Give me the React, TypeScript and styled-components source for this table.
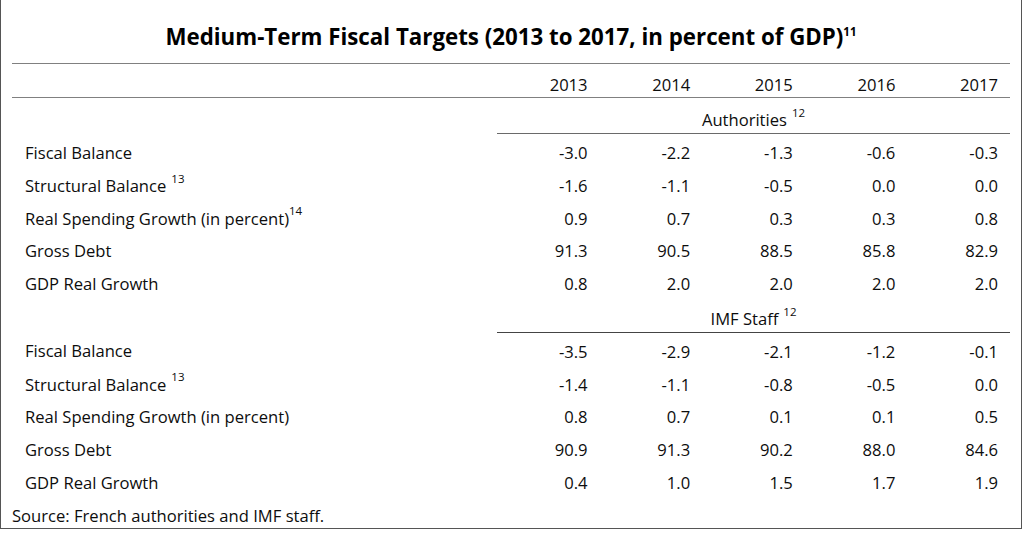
import React from 'react';
import styled, { createGlobalStyle } from 'styled-components';

interface Row {
  label: string;
  note?: string;
  tight?: boolean;
  values: string[];
}

interface Group {
  name: string;
  note: string;
  rows: Row[];
}

const years = ['2013', '2014', '2015', '2016', '2017'];

const groups: Group[] = [
  {
    name: 'Authorities',
    note: '12',
    rows: [
      { label: 'Fiscal Balance', values: ['-3.0', '-2.2', '-1.3', '-0.6', '-0.3'] },
      { label: 'Structural Balance', note: '13', values: ['-1.6', '-1.1', '-0.5', '0.0', '0.0'] },
      {
        label: 'Real Spending Growth (in percent)',
        note: '14',
        tight: true,
        values: ['0.9', '0.7', '0.3', '0.3', '0.8'],
      },
      { label: 'Gross Debt', values: ['91.3', '90.5', '88.5', '85.8', '82.9'] },
      { label: 'GDP Real Growth', values: ['0.8', '2.0', '2.0', '2.0', '2.0'] },
    ],
  },
  {
    name: 'IMF Staff',
    note: '12',
    rows: [
      { label: 'Fiscal Balance', values: ['-3.5', '-2.9', '-2.1', '-1.2', '-0.1'] },
      { label: 'Structural Balance', note: '13', values: ['-1.4', '-1.1', '-0.8', '-0.5', '0.0'] },
      { label: 'Real Spending Growth (in percent)', values: ['0.8', '0.7', '0.1', '0.1', '0.5'] },
      { label: 'Gross Debt', values: ['90.9', '91.3', '90.2', '88.0', '84.6'] },
      { label: 'GDP Real Growth', values: ['0.4', '1.0', '1.5', '1.7', '1.9'] },
    ],
  },
];

const GlobalStyle = createGlobalStyle`
  html, body {
    margin: 0;
    padding: 0;
    background: #ffffff;
  }
  body {
    font-family: "Open Sans", "Noto Sans", "Liberation Sans", sans-serif;
    color: #0d0d0d;
  }
`;

const Frame = styled.div`
  width: 1022px;
  height: 529px;
  border: 1px solid #555;
  border-top: none;
  padding: 0 11px 0 11px;
  box-sizing: border-box;
  overflow: hidden;
`;

const Title = styled.div`
  height: 64px;
  padding-top: 23px;
  box-sizing: border-box;
  text-align: center;
  font-size: 22.3px;
  font-weight: 700;
  line-height: 28px;
  color: #000;
  border-bottom: 1px solid #808080;
`;

const Sup = styled.sup<{ $spaced?: boolean; $bold?: boolean }>`
  font-size: 11.5px;
  line-height: 0;
  vertical-align: 0;
  position: relative;
  top: -0.8em;
  margin-left: ${(p) => (p.$spaced ? '5px' : '0')};
  font-weight: ${(p) => (p.$bold ? 700 : 400)};
`;

const Table = styled.table`
  width: 100%;
  border-collapse: collapse;
  table-layout: fixed;
  font-size: 16.6px;
`;

const LabelCol = styled.col`
  width: 485px;
`;

const ValueCol = styled.col`
  width: 102.6px;
`;

const YearCell = styled.th`
  height: 33px;
  padding: 0 12px 0 0;
  text-align: right;
  font-weight: 400;
  vertical-align: bottom;
  line-height: 24px;
  border-bottom: 1px solid #808080;
`;

const BlankHead = styled.th`
  border-bottom: 1px solid #808080;
`;

const GroupCell = styled.td<{ $tall?: boolean }>`
  height: ${(p) => (p.$tall ? '33px' : '29px')};
  padding: 0 0 2px 0;
  text-align: center;
  vertical-align: bottom;
  line-height: 22px;
  border-bottom: 1px solid ${(p) => (p.$tall ? '#6a6a6a' : '#444')};
`;

const LabelCell = styled.td<{ $first?: boolean }>`
  height: 32.75px;
  padding: ${(p) => (p.$first ? '3px' : '0')} 0 0 13px;
  line-height: 32.75px;
  white-space: nowrap;
  vertical-align: top;
`;

const ValueCell = styled.td<{ $first?: boolean }>`
  height: 32.75px;
  padding: ${(p) => (p.$first ? '3px' : '0')} 12px 0 0;
  line-height: 32.75px;
  text-align: right;
  vertical-align: top;
`;

const SourceCell = styled.td`
  padding: 1px 0 0 0;
  line-height: 29px;
  vertical-align: top;
`;

export default function App() {
  return (
    <>
      <GlobalStyle />
      <Frame>
        <Title>
          Medium-Term Fiscal Targets (2013 to 2017, in percent of GDP)
          <Sup $bold>11</Sup>
        </Title>
        <Table>
          <colgroup>
            <LabelCol />
            {years.map((y) => (
              <ValueCol key={y} />
            ))}
          </colgroup>
          <thead>
            <tr>
              <BlankHead />
              {years.map((y) => (
                <YearCell key={y}>{y}</YearCell>
              ))}
            </tr>
          </thead>
          {groups.map((g, gi) => (
            <tbody key={g.name}>
              <tr>
                <td />
                <GroupCell colSpan={5} $tall={gi === 0}>
                  {g.name}
                  <Sup $spaced>{g.note}</Sup>
                </GroupCell>
              </tr>
              {g.rows.map((r, ri) => (
                <tr key={r.label}>
                  <LabelCell $first={ri === 0}>
                    {r.label}
                    {r.note && <Sup $spaced={!r.tight}>{r.note}</Sup>}
                  </LabelCell>
                  {r.values.map((v, vi) => (
                    <ValueCell key={vi} $first={ri === 0}>
                      {v}
                    </ValueCell>
                  ))}
                </tr>
              ))}
            </tbody>
          ))}
          <tfoot>
            <tr>
              <SourceCell colSpan={6}>Source: French authorities and IMF staff.</SourceCell>
            </tr>
          </tfoot>
        </Table>
      </Frame>
    </>
  );
}
